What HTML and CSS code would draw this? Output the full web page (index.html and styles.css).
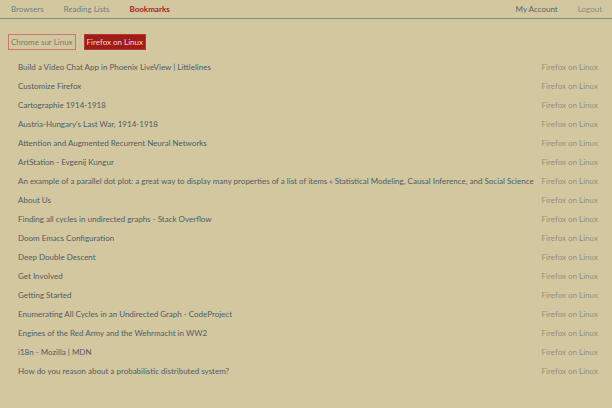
FILE: index.html
```html
<!DOCTYPE html>
<html>
<head>
<meta charset="utf-8">
<link rel="stylesheet" href="styles.css">
</head>
<body>
<header class="topbar">
  <nav class="nav-left">
    <a class="nav-link">Browsers</a>
    <a class="nav-link">Reading Lists</a>
    <a class="nav-link active">Bookmarks</a>
  </nav>
  <nav class="nav-right">
    <a class="nav-link account">My Account</a>
    <a class="nav-link logout">Logout</a>
  </nav>
</header>
<main class="content">
  <div class="filters">
    <button class="filter">Chrome sur Linux</button>
    <button class="filter selected">Firefox on Linux</button>
  </div>
  <ul class="list">
    <li class="row"><span class="title">Build a Video Chat App in Phoenix LiveView | Littlelines</span><span class="src">Firefox on Linux</span></li>
    <li class="row"><span class="title">Customize Firefox</span><span class="src">Firefox on Linux</span></li>
    <li class="row"><span class="title">Cartographie 1914-1918</span><span class="src">Firefox on Linux</span></li>
    <li class="row"><span class="title">Austria-Hungary's Last War, 1914-1918</span><span class="src">Firefox on Linux</span></li>
    <li class="row"><span class="title">Attention and Augmented Recurrent Neural Networks</span><span class="src">Firefox on Linux</span></li>
    <li class="row"><span class="title">ArtStation - Evgenij Kungur</span><span class="src">Firefox on Linux</span></li>
    <li class="row"><span class="title">An example of a parallel dot plot: a great way to display many properties of a list of items « Statistical Modeling, Causal Inference, and Social Science</span><span class="src">Firefox on Linux</span></li>
    <li class="row"><span class="title">About Us</span><span class="src">Firefox on Linux</span></li>
    <li class="row"><span class="title">Finding all cycles in undirected graphs - Stack Overflow</span><span class="src">Firefox on Linux</span></li>
    <li class="row"><span class="title">Doom Emacs Configuration</span><span class="src">Firefox on Linux</span></li>
    <li class="row"><span class="title">Deep Double Descent</span><span class="src">Firefox on Linux</span></li>
    <li class="row"><span class="title">Get Involved</span><span class="src">Firefox on Linux</span></li>
    <li class="row"><span class="title">Getting Started</span><span class="src">Firefox on Linux</span></li>
    <li class="row"><span class="title">Enumerating All Cycles in an Undirected Graph - CodeProject</span><span class="src">Firefox on Linux</span></li>
    <li class="row"><span class="title">Engines of the Red Army and the Wehrmacht in WW2</span><span class="src">Firefox on Linux</span></li>
    <li class="row"><span class="title">i18n - Mozilla | MDN</span><span class="src">Firefox on Linux</span></li>
    <li class="row"><span class="title">How do you reason about a probabilistic distributed system?</span><span class="src">Firefox on Linux</span></li>
  </ul>
</main>
</body>
</html>
```
FILE: styles.css
```css
* { box-sizing: border-box; }
html, body { margin: 0; padding: 0; }
body {
  background: #d3c7a0;
  font-family: Lato, "Liberation Sans", Arial, sans-serif;
  font-size: 8px;
  color: #4e5d63;
  width: 612px;
  height: 408px;
  overflow: hidden;
}
.topbar {
  height: 19px;
  display: flex;
  justify-content: space-between;
  align-items: center;
  border-bottom: 1px solid #7d8c91;
  padding: 0 10px 0 11px;
}
.nav-left, .nav-right { display: flex; gap: 20px; }
.nav-link { color: #6f7e82; text-decoration: none; }
.nav-link.active { color: #a61e1c; font-weight: bold; }
.nav-link.account { color: #56666c; }
.nav-link.logout { color: #8a8c86; }
.content { padding: 15px 14px 0 8px; }
.filters { display: flex; gap: 8px; }
.filter {
  font-family: inherit;
  font-size: 8px;
  height: 16px;
  padding: 0 2px;
  background: transparent;
  color: #7a7a72;
  border: 1px solid #c77866;
  border-radius: 0;
}
.filter.selected {
  background: #a11c18;
  color: #f2d7c4;
  border-color: #b23a30;
}
.list { list-style: none; margin: 11px 0 0; padding: 0 0 0 10px; }
.row {
  display: flex;
  justify-content: space-between;
  gap: 8px;
  height: 19px;
  line-height: 12px;
  white-space: nowrap;
}
.title { color: #4e5d63; min-width: 0; overflow: hidden; }
.src { color: #919084; flex-shrink: 0; }
```
